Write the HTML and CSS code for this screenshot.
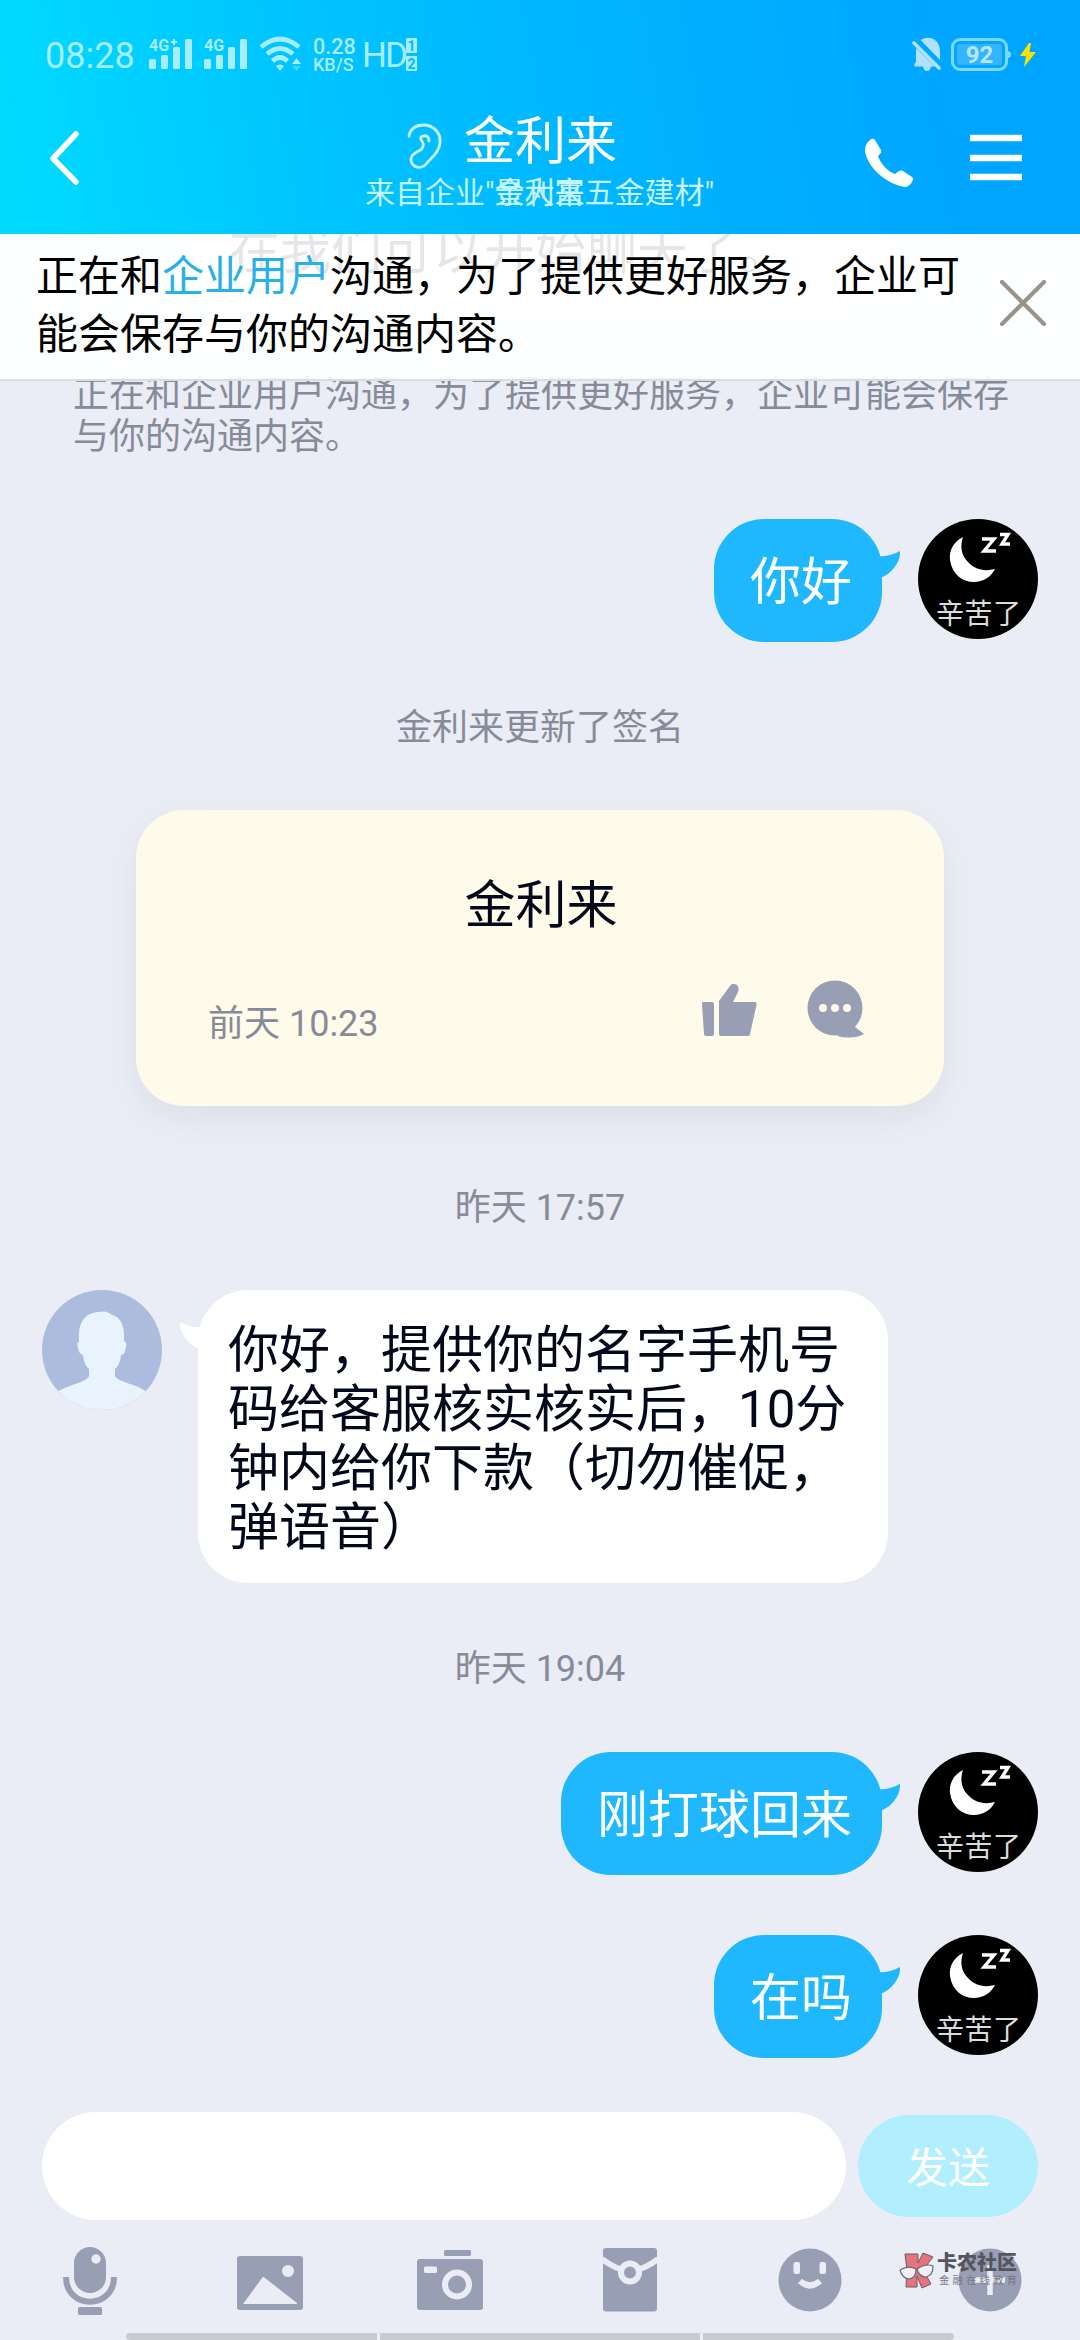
FILE: index.html
```html
<!DOCTYPE html>
<html lang="zh-CN">
<head>
<meta charset="utf-8">
<title>金利来</title>
<link rel="stylesheet" href="styles.css">
</head>
<body>
<svg class="defs" width="0" height="0" aria-hidden="true">
  <symbol id="moon-avatar" viewBox="0 0 120 120">
    <circle cx="60" cy="60" r="60" fill="#000"/>
    <path d="M45 18C35 23 31 32 32 41C34 55 44 63 56 63C65 63 73 58 77 50C66 53 56 50 50 43C43 36 42 27 45 18Z" fill="#fff"/>
    <path d="M64 20H76L66 32H78M82 15.500H90L84 25H92" fill="none" stroke="#fff" stroke-width="3.400"/>
    <text x="18" y="105" font-size="28" letter-spacing="0.500" fill="#dcdcdc">辛苦了</text>
  </symbol>
  <symbol id="tail" viewBox="0 0 24 34">
    <path d="M0 6C9 7 17 5 24 1C25 10 17 24 4 28H0Z" fill="currentColor"/>
  </symbol>
</svg>
<div class="app">
  <header class="header">
    <div class="status">
      <span class="clock">08:28</span>
      <svg class="signal" width="44" height="34" viewBox="0 0 44 34"><text x="0" y="14" textLength="20" lengthAdjust="spacingAndGlyphs">4G</text><path d="M22 5h6M25 2v6" stroke="currentColor" stroke-width="2"/><rect x="0" y="22" width="7" height="10" rx="1.5"/><rect x="12" y="18" width="7" height="14" rx="1.5"/><rect x="24" y="10" width="7" height="22" rx="1.5"/><rect x="36" y="2" width="7" height="30" rx="1.5"/></svg>
      <svg class="signal second" width="44" height="34" viewBox="0 0 44 34"><text x="0" y="14" textLength="20" lengthAdjust="spacingAndGlyphs">4G</text><rect x="0" y="22" width="7" height="10" rx="1.5"/><rect x="12" y="18" width="7" height="14" rx="1.5"/><rect x="24" y="10" width="7" height="22" rx="1.5"/><rect x="36" y="2" width="7" height="30" rx="1.5"/></svg>
      <svg class="wifi" width="44" height="36" viewBox="0 0 44 36"><g fill="none" stroke="currentColor" stroke-width="4.600"><path d="M2 11Q21-5 40 11M8 18Q21 7 34 18M13.500 25Q21 18 28.500 25"/></g><path d="M21 35L17 30Q21 27 25 30Z" fill="currentColor"/><path d="M33 28L37.500 22L42 28Z" fill="currentColor"/><path d="M33 30L37.500 35L42 30Z" fill="currentColor" opacity=".4"/></svg>
      <span class="speed"><b>0.28</b><i>KB/S</i></span>
      <span class="hd">HD</span>
      <span class="sims"><i>1</i><i>2</i></span>
      <span class="space"></span>
      <svg class="bell" width="30" height="36" viewBox="0 0 30 36"><path d="M8.500 4C18-2 28 4 28 15V24ZM4 12L23 30.500H19Q18 35 15 35Q12 35 11 30.500H3Q1 29 4 26Z" fill="currentColor"/><path d="M2 7L27 32" stroke="currentColor" stroke-width="3.600" stroke-linecap="round"/></svg>
      <span class="battery"><span>92</span></span>
      <svg width="18" height="24" viewBox="0 0 18 24"><path d="M10 0L1 13H7L5 24L17 9H10.500L12 0Z" fill="#ffe100"/></svg>
    </div>
    <div class="nav">
      <svg class="back" width="34" height="60" viewBox="0 0 34 60"><path d="M28 6L5 30.500L28 54" fill="none" stroke="#fff" stroke-width="5.600" stroke-linecap="round" stroke-linejoin="round"/></svg>
      <div class="who">
        <div class="name"><svg width="36" height="48" viewBox="0 0 36 48"><path d="M3 14C4 7 10 3 17 3C28 3 35 11 34 21C33 30 27 34 21 41C18 45 15 46 11 45C5 44 4 37 6 34C9 29 19 29 17 21C15 18 13 15 17 14C21 13 23 15 23 19" fill="none" stroke="#c8f5ff" stroke-width="2.800" stroke-linecap="round"/></svg><h1>金利来</h1></div>
        <div class="source">来自企业"<span class="overlap"><span>金利来</span><span>景大富</span></span>五金建材"</div>
      </div>
      <svg class="call" width="50" height="52" viewBox="0 0 50 52"><path d="M3 5L7 1Q9 0 11 2L17 12Q18 14 16 16L14 18C17 26 23 33 31 36L35 33Q37 32 39 33L48 39Q50 41 48 44Q45 49 41 49C21 46 3 28 1 13Q1 8 3 5Z" fill="#fff"/></svg>
      <svg class="menu" width="52" height="48" viewBox="0 0 52 48"><path d="M0 4h52M0 24h52M0 43h52" stroke="#fff" stroke-width="6.500"/></svg>
    </div>
  </header>

  <main class="chat">
    <div class="earlier">在我们可以开始聊天了。</div>
    <aside class="banner">
      <p>正在和<a>企业用户</a>沟通，为了提供更好服务，企业可能会保存与你的沟通内容。</p>
      <svg width="46" height="46" viewBox="0 0 46 46"><path d="M2 2L44 44M44 2L2 44" stroke="#98948b" stroke-width="4.200" stroke-linecap="round"/></svg>
    </aside>
    <p class="tip">正在和企业用户沟通，为了提供更好服务，企业可能会保存与你的沟通内容。</p>

    <div class="row mine first"><div class="bubble">你好<svg class="tail"><use href="#tail"/></svg></div><svg class="avatar"><use href="#moon-avatar"/></svg></div>
    <p class="note signed">金利来更新了签名</p>
    <article class="card">
      <h2>金利来</h2>
      <div class="card-foot"><time>前天 10:23</time>
        <svg class="like" width="56" height="54" viewBox="0 0 56 54"><path d="M2 19H11Q13 19 13 21V51Q13 53 11 53H5Q3 53 3 51L1 21Q1 19 2 19ZM18 18L29 3Q31 0 34 1Q39 3 37 9L32 19H54Q56 19 55.500 22L49 51Q49 53 46 53H20Q18 53 18 51Z" fill="#989eb4"/></svg>
        <svg width="58" height="58" viewBox="0 0 58 58"><circle cx="28" cy="28" r="27.500" fill="#989eb4"/><path d="M30 56Q46 60 57 54L48 47Z" fill="#989eb4"/><g fill="#fefbea"><circle cx="16" cy="28" r="4"/><circle cx="28" cy="28" r="4"/><circle cx="40" cy="28" r="4"/></g></svg>
      </div>
    </article>
    <p class="note yesterday">昨天 17:57</p>
    <div class="row theirs">
      <svg class="avatar" viewBox="0 0 120 120"><defs><clipPath id="round"><circle cx="60" cy="60" r="60"/></clipPath></defs><g clip-path="url(#round)"><path d="M0 0H120V120H0Z" fill="#abbcdf"/><path d="M37 52C36 32 42 23 57 22Q65 20 70 25C79 27 83 36 82 51Q86 52 83 61Q82 65 79 65Q78 75 73 79V86C77 93 94 93 106 103V120H13V103C27 94 44 93 47 86V79Q42 75 41 65Q37 64 36 58Q34 52 37 52Z" fill="#e9f3fd"/></g></svg>
      <div class="bubble">你好，提供你的名字手机号<br>码给客服核实核实后，10分<br>钟内给你下款（切勿催促，<br>弹语音）<svg class="tail"><use href="#tail"/></svg></div>
    </div>
    <p class="note evening">昨天 19:04</p>
    <div class="row mine"><div class="bubble">刚打球回来<svg class="tail"><use href="#tail"/></svg></div><svg class="avatar"><use href="#moon-avatar"/></svg></div>
    <div class="row mine last"><div class="bubble">在吗<svg class="tail"><use href="#tail"/></svg></div><svg class="avatar"><use href="#moon-avatar"/></svg></div>
  </main>

  <footer class="composer">
    <div class="entry"><div class="field"></div><button class="send">发送</button></div>
    <div class="tools">
      <svg viewBox="0 0 72 72"><rect x="20" y="3" width="32" height="46" rx="16"/><circle class="hole" cx="42" cy="15" r="4.700"/><path d="M12 33C12 66 60 66 60 33" fill="none" stroke="#989eb4" stroke-width="6"/><rect x="24" y="63" width="24" height="8" rx="1.500"/></svg>
      <svg viewBox="0 0 72 72"><rect x="3" y="12" width="66" height="54" rx="3"/><circle class="hole" cx="54" cy="27" r="6"/><path class="hole" d="M9 60L28 34Q29 32 31 34L63 59V60Z"/></svg>
      <svg viewBox="0 0 72 72"><rect x="30" y="6" width="27" height="6" rx="1.500"/><rect x="3" y="15" width="66" height="51" rx="3"/><rect class="hole" x="10" y="22.500" width="13" height="6.500" rx="1.500"/><circle cx="43" cy="40.500" r="12" stroke="#eaedf5" stroke-width="6"/></svg>
      <svg viewBox="0 0 72 72"><rect x="9" y="4" width="54" height="63.500" rx="3"/><path d="M8 15Q22 26 36 27Q50 26 64 15" fill="none" stroke="#eaedf5" stroke-width="6"/><circle cx="36" cy="28.500" r="9" stroke="#eaedf5" stroke-width="6"/></svg>
      <svg viewBox="0 0 72 72"><circle cx="36" cy="36" r="31.500"/><rect class="hole" x="19.500" y="18" width="6.500" height="12" rx="2"/><rect class="hole" x="45.500" y="18" width="6.500" height="12" rx="2"/><path d="M26 37Q36 46 46 37" fill="none" stroke="#eaedf5" stroke-width="6"/></svg>
      <svg viewBox="0 0 72 72"><circle cx="36" cy="36" r="31.500"/><path d="M21 36h30M36 21v30" stroke="#eaedf5" stroke-width="5.500"/></svg>
    </div>
    <div class="homebar"><i></i><i></i><i></i></div>
    <div class="watermark">
      <svg width="36" height="38" viewBox="0 0 36 38"><path d="M6 2H19V11L24 1L34 5L24 18L32 32L23 36L18 24V35H7L8 18Z" fill="#e6747f" stroke="#6c5960" stroke-width="1"/><path d="M1 18Q9 13 17 17Q17 26 10 27Q3 26 1 18ZM18 17Q27 11 34 14Q34 24 27 25Q20 25 18 17Z" fill="#eff0f5" stroke="#6c6c73" stroke-width="1.200"/></svg>
      <div><strong>卡农社区</strong><small>金融在线教育</small></div>
    </div>
  </footer>
</div>
</body>
</html>
```
FILE: styles.css
```css
* { box-sizing: border-box; margin: 0; padding: 0; }
body { width: 1080px; height: 2340px; overflow: hidden; background: #eaedf5; font-family: Roboto, "Noto Sans CJK SC", sans-serif; }
svg { display: block; flex: none; }
.defs { position: absolute; }
h1, h2 { font-weight: 400; font-size: 51px; }
i { font-style: normal; }
.app { height: 2340px; display: flex; flex-direction: column; }

.header { height: 234px; flex: none; background: linear-gradient(80deg, #00dcff 0%, #00c5ff 28%, #00b1ff 62%, #00a5ff 90%); }
.status { height: 76px; padding: 35px 43px 0 45px; display: flex; align-items: flex-start; color: #a8edff; }
.clock { font-size: 36px; line-height: 42px; width: 103px; }
.signal { margin-top: 2px; margin-left: 1px; width: 44px; fill: currentColor; overflow: visible; }
.signal.second { margin-left: 11px; }
.signal text { font-size: 17px; font-weight: 700; }
.wifi { margin: 1px 0 0 11px; }
.speed { margin: 0 0 0 10px; width: 42px; display: flex; flex-direction: column; }
.speed b { font-size: 21.5px; line-height: 23px; font-weight: 500; }
.speed i { font-size: 18px; line-height: 14px; font-weight: 500; }
.hd { margin: -1px 0 0 7px; width: 44px; font-size: 35px; line-height: 43px; letter-spacing: -2px; font-weight: 400; white-space: nowrap; }
.sims { display: grid; gap: 3px; margin-top: 3px; }
.sims i { width: 11px; height: 15px; border-radius: 1px; background: #a8edff; color: #00b8ff; font: 700 14px/16px Roboto; text-align: center; }
.space { flex: 1; }
.bell { margin: 1px 9px 0 0; color: #b0e2ff; }
.battery { position: relative; width: 57px; height: 33px; margin: 3px 11px 0 0; border: 3px solid #7dd8ff; border-radius: 9px; padding: 3px; }
.battery span { display: block; height: 21px; border-radius: 3px; background: #33b5ff; color: #b7e7ff; font: 700 24px/22px Roboto; text-align: center; }
.battery::after { content: ""; position: absolute; right: -6px; top: 10px; width: 4px; height: 7px; border-radius: 0 4px 4px 0; background: #7dd8ff; }
.status > svg:last-child { margin-top: 8px; }

.nav { height: 158px; display: flex; align-items: flex-start; padding: 0 57px 0 48px; }
.back { margin-top: 52px; }
.who { margin-left: 283px; width: 352px; padding-top: 38px; }
.name { display: flex; align-items: center; gap: 22px; margin-left: 41px; height: 58px; }
.name svg { margin-top: 6px; }
.name h1 { color: #fff; line-height: 58px; margin-top: -2px; }
.source { color: #c4f4ff; font-size: 30px; line-height: 34px; margin-top: 4px; white-space: nowrap; }
.overlap { display: inline-grid; }
.overlap span { grid-area: 1 / 1; }
.call { margin: 62px 0 0 147px; }
.menu { margin: 58px 0 0 56px; }

.chat { flex: 1; position: relative; overflow: hidden; }
.earlier { height: 74px; width: 690px; margin-left: 198px; padding: 0 31px; background: #fff; border-radius: 0 0 48px 48px; color: #03081a; font-size: 51px; line-height: 36px; overflow: hidden; }
.banner { position: absolute; left: 0; right: 0; top: 0; height: 147px; display: flex; justify-content: space-between; padding: 14px 34px 0 36px; background: rgba(255, 255, 255, .9); border-bottom: 2px solid #dcdde0; }
.banner p { width: 930px; font-size: 42px; line-height: 58px; color: #000; }
.banner a { color: #27b1e8; }
.banner svg { margin-top: 32px; }
.tip { margin-top: 66px; padding: 0 70px 0 73px; font-size: 36px; line-height: 42px; color: #878b99; }
.row { display: flex; height: 123px; }
.mine { justify-content: flex-end; padding-right: 42px; gap: 36px; }
.mine.first { margin-top: 61px; }
.mine.last { margin-top: 60px; }
.avatar { width: 120px; height: 120px; }
.bubble { position: relative; padding: 34px 30px 0 36px; border-radius: 50px; font-size: 51px; line-height: 59px; }
.mine .bubble { background: #1fb8ff; color: #fff; white-space: nowrap; }
.tail { position: absolute; top: 31px; width: 24px; height: 34px; }
.mine .tail { right: -18px; color: #1fb8ff; }
.theirs .tail { left: -18px; color: #fff; transform: scaleX(-1); }
.theirs { height: 293px; padding-left: 42px; gap: 36px; }
.theirs .bubble { width: 690px; padding: 31px 0 0 30px; background: #fff; color: #03081a; }
.note { text-align: center; font-size: 36px; line-height: 42px; color: #878b99; }
.signed { margin-top: 65px; }
.card { width: 808px; height: 296px; margin: 61px 0 0 136px; padding: 66px 79px 0 72px; border-radius: 48px; background: #fefbea; box-shadow: 0 12px 30px rgba(100, 110, 140, .1); }
.card h2 { text-align: center; line-height: 60px; color: #03081a; padding-left: 9px; }
.card-foot { display: flex; align-items: flex-start; margin-top: 44px; }
.card-foot time { flex: 1; font-size: 36px; line-height: 42px; color: #878b99; margin-top: 23px; }
.card-foot .like { margin: 3px 50px 0 0; }
.yesterday { margin: 81px 0 61px; }
.evening { margin: 65px 0 62px; }

.composer { position: relative; height: 228px; flex: none; }
.entry { display: flex; align-items: center; gap: 12px; padding: 0 42px; }
.field { flex: 1; height: 108px; border-radius: 54px; background: #fff; }
.send { width: 180px; height: 102px; border: 0; border-radius: 51px; padding-bottom: 3px; background: #b1efff; color: #fff; font: 42px Roboto, "Noto Sans CJK SC", sans-serif; }
.tools { display: grid; grid-template-columns: repeat(6, 1fr); justify-items: center; padding-top: 24px; height: 113px; }
.tools svg { width: 72px; height: 72px; fill: #989eb4; }
.tools .hole { fill: #eaedf5; }
.homebar { display: grid; grid-template-columns: 251px 320px 251px; gap: 3px; height: 7px; margin-left: 126px; }
.homebar i { background: #c9cad0; }
.homebar i:first-child { border-radius: 4px 0 0 4px; }
.homebar i:last-child { border-radius: 0 4px 4px 0; }
.watermark { position: absolute; left: 899px; top: 140px; display: flex; gap: 2px; }
.watermark div { display: flex; flex-direction: column; }
.watermark strong { font-size: 20px; line-height: 22px; color: #55555f; font-weight: 900; }
.watermark small { font-size: 10.5px; line-height: 13px; letter-spacing: 3px; padding-left: 2px; color: #777984; white-space: nowrap; }
```
